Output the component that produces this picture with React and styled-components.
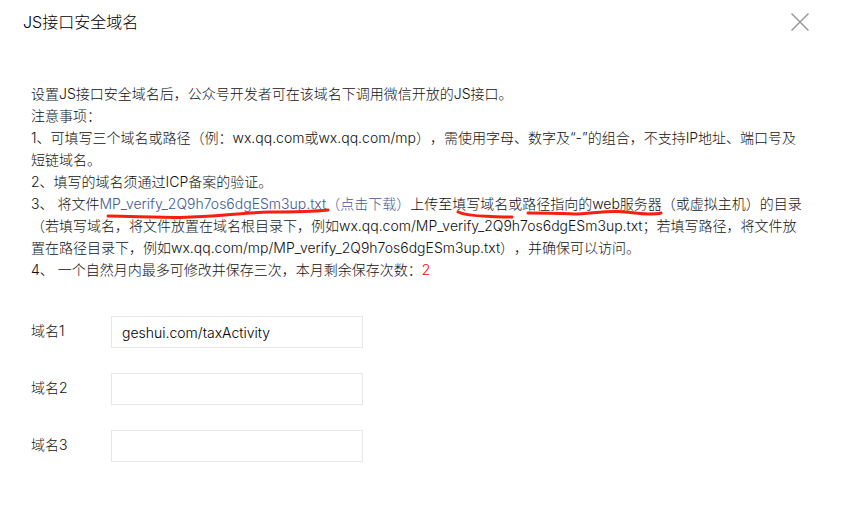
import React, { useState } from 'react';
import styled, { createGlobalStyle } from 'styled-components';

const GlobalStyle = createGlobalStyle`
  body {
    margin: 0;
    background: #fff;
    color: #111;
    font-family: Inter, "Noto Sans CJK SC", sans-serif;
    font-size: 14px;
    font-weight: 300;
    line-height: 22px;
    text-spacing-trim: space-all;
  }
`;

const Header = styled.header`
  display: flex;
  align-items: center;
  justify-content: space-between;
  height: 44px;
  padding: 0 32px 0 23px;
`;

const Title = styled.h1`
  margin: 0;
  color: #000;
  font-size: 16px;
  font-weight: 300;
`;

const CloseButton = styled.button`
  display: flex;
  padding: 0;
  border: 0;
  background: none;
  color: #999;
  cursor: pointer;
`;

const Content = styled.main`
  padding: 39px 34px 48px 31px;
`;

const Notice = styled.p`
  margin: 0;
`;

const Download = styled.a`
  color: #3f5a94;
  text-decoration: none;
`;

const Marked = styled.span`
  position: relative;

  svg {
    position: absolute;
    left: 6px;
    top: 12px;
    overflow: visible;
    pointer-events: none;
  }
`;

const Count = styled.span`
  color: #f00;
`;

const Form = styled.form`
  display: grid;
  gap: 25px;
  margin-top: 35px;
`;

const Field = styled.div`
  display: flex;
  align-items: flex-start;
`;

const Label = styled.label`
  width: 80px;
  line-height: 30px;
`;

const Input = styled.input`
  box-sizing: border-box;
  width: 252px;
  height: 32px;
  padding: 1px 10px 0;
  border: 1px solid #e7e7eb;
  background: #fff;
  color: #000;
  font: inherit;
  outline: none;
`;

const file = 'MP_verify_2Q9h7os6dgESm3up.txt';

// hand-drawn red underline
function Mark({ d, width, children }) {
  return (
    <Marked>
      {children}
      <svg width={width} height="14" fill="none" stroke="#fa1e0e" strokeWidth="3" strokeLinecap="round" strokeLinejoin="round" aria-hidden="true">
        <path d={d} />
      </svg>
    </Marked>
  );
}

export default function App() {

  const [domains, setDomains] = useState(['geshui.com/taxActivity', '', '']);

  const change = (index, value) => {
    setDomains(domains.map((domain, i) => (i === index ? value : domain)));
  };

  return (
    <>
      <GlobalStyle />
      <Header>
        <Title>JS接口安全域名</Title>
        <CloseButton type="button" aria-label="关闭">
          <svg width="18" height="18" fill="none" stroke="currentColor" strokeWidth="1.5">
            <path d="M0.5 0.5L17.5 17.5M17.5 0.5L0.5 17.5" />
          </svg>
        </CloseButton>
      </Header>
      <Content>
        <Notice>设置JS接口安全域名后，公众号开发者可在该域名下调用微信开放的JS接口。</Notice>
        <Notice>注意事项：</Notice>
        <Notice>1、可填写三个域名或路径（例：wx.qq.com或wx.qq.com/mp），需使用字母、数字及“-”的组合，不支持IP地址、端口号及短链域名。</Notice>
        <Notice>2、填写的域名须通过ICP备案的验证。</Notice>
        <Notice>
          3、 将文件
          <Download href={`#${file}`}>
            <Mark width={226} d="M3 9C24 9 48 10.5 76 10.5C110 10 134 6 165 5C184 5 204 5 223 3">{file}</Mark>
            （点击下载）
          </Download>
          上传至
          <Mark width={56} d="M0 5C9 9 22 9 33 9.5C41 10 48 10 54 10">填写域名</Mark>
          或
          <Mark width={134} d="M0 6C16 6 32 6 46 7C60 7 74 4 90 4.5C102 5 110 7 120 7C126 7 130 7 133 6">路径指向的web服务器</Mark>
          （或虚拟主机）的目录
          <br />
          {`（若填写域名，将文件放置在域名根目录下，例如wx.qq.com/${file}；若填写路径，将文件放置在路径目录下，例如wx.qq.com/mp/${file}），并确保可以访问。`}
        </Notice>
        <Notice>4、 一个自然月内最多可修改并保存三次，本月剩余保存次数：<Count>2</Count></Notice>
        <Form onSubmit={e => e.preventDefault()}>
          {domains.map((domain, i) => (
            <Field key={i}>
              <Label htmlFor={`domain${i + 1}`}>{`域名${i + 1}`}</Label>
              <Input id={`domain${i + 1}`} type="text" value={domain} onChange={e => change(i, e.target.value)} />
            </Field>
          ))}
        </Form>
      </Content>
    </>
  );
}
